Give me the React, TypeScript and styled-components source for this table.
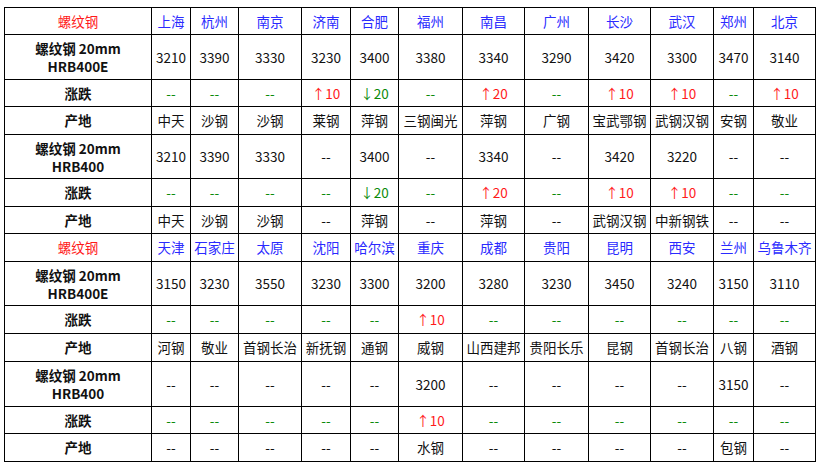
import styled, { createGlobalStyle } from 'styled-components';

const GlobalStyle = createGlobalStyle`
  body {
    margin: 0;
    background: #ffffff;
    font-family: "Noto Sans CJK SC", "Noto Sans", sans-serif;
  }
`;

const Page = styled.div`
  padding: 7px 0 0 4px;
`;

const PriceTable = styled.table`
  border-collapse: collapse;
  table-layout: fixed;
  width: 812px;
  font-size: 13.5px;
  line-height: 17px;
  color: #111111;
`;

const Row = styled.tr<{ $h: number }>`
  height: ${(p) => p.$h}px;
`;

const Cell = styled.td<{ $tone?: 'up' | 'down' | 'flat' | 'city' | 'title' }>`
  border: 1px solid #000000;
  padding: 0;
  text-align: center;
  vertical-align: middle;
  white-space: nowrap;
  overflow: hidden;
  color: ${(p) =>
    p.$tone === 'up' || p.$tone === 'title'
      ? '#ff1a1a'
      : p.$tone === 'down' || p.$tone === 'flat'
      ? '#0a8a0a'
      : p.$tone === 'city'
      ? '#2a2aff'
      : '#111111'};
`;

const Label = styled(Cell)`
  font-weight: 700;
  color: #111111;
`;

const LabelLine = styled.span`
  display: block;
  line-height: 18px;
`;

const widths = [147, 39, 48, 63, 49, 48, 64, 62, 64, 62, 63, 40, 62];

type Block = {
  cities: string[];
  e: string[];
  eChg: string[];
  eSrc: string[];
  p: string[];
  pChg: string[];
  pSrc: string[];
};

const blocks: Block[] = [
  {
    cities: ['上海', '杭州', '南京', '济南', '合肥', '福州', '南昌', '广州', '长沙', '武汉', '郑州', '北京'],
    e: ['3210', '3390', '3330', '3230', '3400', '3380', '3340', '3290', '3420', '3300', '3470', '3140'],
    eChg: ['--', '--', '--', '↑10', '↓20', '--', '↑20', '--', '↑10', '↑10', '--', '↑10'],
    eSrc: ['中天', '沙钢', '沙钢', '莱钢', '萍钢', '三钢闽光', '萍钢', '广钢', '宝武鄂钢', '武钢汉钢', '安钢', '敬业'],
    p: ['3210', '3390', '3330', '--', '3400', '--', '3340', '--', '3420', '3220', '--', '--'],
    pChg: ['--', '--', '--', '--', '↓20', '--', '↑20', '--', '↑10', '↑10', '--', '--'],
    pSrc: ['中天', '沙钢', '沙钢', '--', '萍钢', '--', '萍钢', '--', '武钢汉钢', '中新钢铁', '--', '--'],
  },
  {
    cities: ['天津', '石家庄', '太原', '沈阳', '哈尔滨', '重庆', '成都', '贵阳', '昆明', '西安', '兰州', '乌鲁木齐'],
    e: ['3150', '3230', '3550', '3230', '3300', '3200', '3280', '3230', '3450', '3240', '3150', '3110'],
    eChg: ['--', '--', '--', '--', '--', '↑10', '--', '--', '--', '--', '--', '--'],
    eSrc: ['河钢', '敬业', '首钢长治', '新抚钢', '通钢', '威钢', '山西建邦', '贵阳长乐', '昆钢', '首钢长治', '八钢', '酒钢'],
    p: ['--', '--', '--', '--', '--', '3200', '--', '--', '--', '--', '3150', '--'],
    pChg: ['--', '--', '--', '--', '--', '↑10', '--', '--', '--', '--', '--', '--'],
    pSrc: ['--', '--', '--', '--', '--', '水钢', '--', '--', '--', '--', '包钢', '--'],
  },
];

const changeTone = (v: string) => (v.startsWith('↑') ? 'up' : v.startsWith('↓') ? 'down' : 'flat');

const heights = [
  [27, 45, 27, 28, 44, 28, 27],
  [28, 44, 28, 28, 45, 27, 28],
];

export default function App() {
  return (
    <Page>
      <GlobalStyle />
      <PriceTable>
        <colgroup>
          {widths.map((w, i) => (
            <col key={i} style={{ width: w }} />
          ))}
        </colgroup>
        <tbody>
          {blocks.map((b, bi) => {
            const h = heights[bi];
            return [
              <Row key={`${bi}-c`} $h={h[0]}>
                <Cell $tone="title">螺纹钢</Cell>
                {b.cities.map((c, i) => (
                  <Cell key={i} $tone="city">
                    {c}
                  </Cell>
                ))}
              </Row>,
              <Row key={`${bi}-e`} $h={h[1]}>
                <Label>
                  <LabelLine>螺纹钢 20mm</LabelLine>
                  <LabelLine>HRB400E</LabelLine>
                </Label>
                {b.e.map((v, i) => (
                  <Cell key={i}>{v}</Cell>
                ))}
              </Row>,
              <Row key={`${bi}-ec`} $h={h[2]}>
                <Label>涨跌</Label>
                {b.eChg.map((v, i) => (
                  <Cell key={i} $tone={changeTone(v)}>
                    {v}
                  </Cell>
                ))}
              </Row>,
              <Row key={`${bi}-es`} $h={h[3]}>
                <Label>产地</Label>
                {b.eSrc.map((v, i) => (
                  <Cell key={i}>{v}</Cell>
                ))}
              </Row>,
              <Row key={`${bi}-p`} $h={h[4]}>
                <Label>
                  <LabelLine>螺纹钢 20mm</LabelLine>
                  <LabelLine>HRB400</LabelLine>
                </Label>
                {b.p.map((v, i) => (
                  <Cell key={i}>{v}</Cell>
                ))}
              </Row>,
              <Row key={`${bi}-pc`} $h={h[5]}>
                <Label>涨跌</Label>
                {b.pChg.map((v, i) => (
                  <Cell key={i} $tone={changeTone(v)}>
                    {v}
                  </Cell>
                ))}
              </Row>,
              <Row key={`${bi}-ps`} $h={h[6]}>
                <Label>产地</Label>
                {b.pSrc.map((v, i) => (
                  <Cell key={i}>{v}</Cell>
                ))}
              </Row>,
            ];
          })}
        </tbody>
      </PriceTable>
    </Page>
  );
}
